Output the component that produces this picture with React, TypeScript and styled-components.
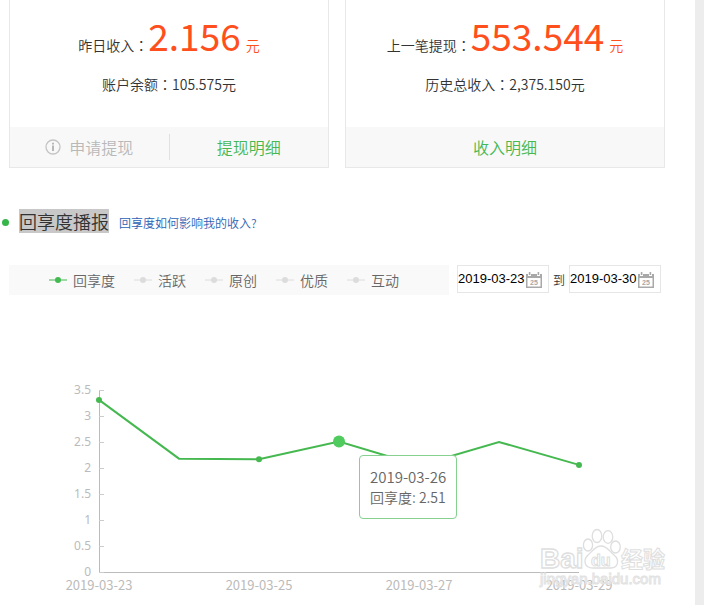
import React, { useState } from "react";
import styled, { createGlobalStyle } from "styled-components";

const GlobalStyle = createGlobalStyle`
  * { box-sizing: border-box; }
  body {
    margin: 0;
    background: #ededed;
    color: #333;
    font-family: "Noto Sans CJK SC", "Noto Sans", sans-serif;
    font-size: 14px;
    font-weight: 350;
    line-height: 20px;
  }
  button, input { font: inherit; color: inherit; }
`;

const Page = styled.main`
  min-height: 100vh;
  margin-right: 9px;
  padding: 0 30px 0 9px;
  background: #fff;
`;

const Cards = styled.section`
  display: grid;
  grid-template-columns: 1fr 1fr;
  gap: 16px;
`;

const Card = styled.article`
  display: flex;
  flex-direction: column;
  border: 1px solid #e8e8e8;
  border-top: 0;
`;

const CardBody = styled.div`
  padding: 8px 0 33px;
`;

const AmountRow = styled.div`
  display: flex;
  justify-content: center;
  align-items: baseline;
  margin-bottom: 12px;
`;

const Amount = styled.strong`
  color: #ff4f1c;
  font-size: 37px;
  font-weight: 400;
  line-height: 54px;
`;

const Unit = styled.span`
  margin-left: 5px;
  color: #ff4f1c;
`;

const Colon = styled.span`
  font-family: "Noto Sans CJK TC", sans-serif;
`;

const Summary = styled.p`
  margin: 0;
  text-align: center;
`;

const CardFooter = styled.footer`
  display: flex;
  align-items: center;
  height: 40px;
  background: #f8f8f8;
`;

const FooterButton = styled.button`
  display: flex;
  flex: 1;
  align-items: center;
  justify-content: center;
  gap: 8px;
  height: 26px;
  padding: 0;
  border: 0;
  background: none;
  color: #b8b8b8;
  font-size: 16px;
`;

const FooterLink = styled.a`
  flex: 1;
  color: #45b854;
  font-size: 16px;
  text-align: center;
  text-decoration: none;
`;

const Divider = styled.span`
  width: 1px;
  height: 26px;
  background: #e0e0e0;
`;

const SectionHead = styled.header`
  display: flex;
  align-items: center;
  margin: 41px 0 32px -7px;
`;

const Bullet = styled.span`
  width: 7px;
  height: 7px;
  margin: 2px 10px 0 0;
  border-radius: 50%;
  background: #36b548;
`;

const Title = styled.h2`
  margin: 0 10px 0 0;
  background: #c8c8c8;
  font-size: 18px;
  font-weight: 350;
  line-height: 24px;
`;

const HelpLink = styled.a`
  padding-top: 3px;
  color: #2a62b4;
  font-size: 12px;
  text-decoration: none;
`;

const Toolbar = styled.div`
  display: flex;
  align-items: flex-start;
  margin-right: 4px;
`;

const Legend = styled.div`
  display: flex;
  flex: 1;
  align-items: center;
  gap: 19px;
  height: 30px;
  margin-right: 8px;
  padding-left: 40px;
  background: #f9f9f9;
`;

const LegendItem = styled.button<{ $active: boolean }>`
  display: flex;
  align-items: center;
  gap: 6px;
  padding: 0;
  border: 0;
  background: none;
  color: #666;
  white-space: nowrap;

  svg { color: ${(p) => (p.$active ? "#43b952" : "#dcdcdc")}; }
`;

const DateField = styled.label`
  display: flex;
  align-items: center;
  width: 92px;
  height: 28px;
  border: 1px solid #e6e6e6;
`;

const DateInput = styled.input`
  width: 68px;
  padding: 0;
  border: 0;
  outline: 0;
  background: none;
  color: #000;
  font-family: "Liberation Sans", Arial, sans-serif;
  font-size: 13px;
`;

const To = styled.span`
  width: 20px;
  font-size: 12px;
  line-height: 30px;
  text-align: center;
`;

const ChartArea = styled.section`
  position: relative;
  margin-top: 70px;
`;

const ChartSvg = styled.svg`
  display: block;
  width: 100%;
  overflow: visible;
`;

const AxisLabel = styled.text`
  fill: #bbb;
  font-family: "Noto Sans", sans-serif;
  font-size: 12px;
  font-weight: 400;
`;

const DateLabel = styled(AxisLabel)`
  font-family: "Noto Sans CJK SC", sans-serif;
  font-size: 13px;
`;

const Tooltip = styled.div`
  position: absolute;
  width: 98px;
  padding: 10px;
  border: 1px solid #86d090;
  border-radius: 4px;
  background: #fff;
  color: #666;
  line-height: 21px;
  white-space: nowrap;
`;

const TooltipDate = styled.div`
  font-size: 15px;
`;

const Watermark = styled.svg`
  position: absolute;
  right: -3px;
  bottom: 11px;
  overflow: visible;
  pointer-events: none;
`;

const InfoIcon = () => (
  <svg width="16" height="16" viewBox="0 0 16 16" aria-hidden="true">
    <circle cx="8" cy="8" r="7" fill="none" stroke="#c4c4c4" strokeWidth="1.3" />
    <path d="M8 3.8v1.7M8 6.6v5.4" fill="none" stroke="#b0b0b0" strokeWidth="1.8" />
  </svg>
);

const SeriesIcon = () => (
  <svg width="18" height="8" viewBox="0 0 18 8" aria-hidden="true">
    <path d="M0 4h18" stroke="currentColor" strokeWidth="1" />
    <circle cx="9" cy="4" r="3" fill="currentColor" />
  </svg>
);

const CalendarIcon = () => (
  <svg width="16" height="17" viewBox="0 0 16 17" aria-hidden="true">
    <path d="M0 3h2v2h3V3h6v2h3V3h2v14H0z" fill="#a9a9a9" />
    <path d="M1.5 7h13v8.5h-13z" fill="#fff" />
    <path d="M2.8 1h1.6v3H2.8zM11.6 1h1.6v3h-1.6z" fill="#a9a9a9" />
    <text x="8" y="14" textAnchor="middle" fontSize="7" fontWeight="700" fontFamily="Liberation Sans, sans-serif" fill="#a8a8a8">25</text>
  </svg>
);

const SERIES = ["回享度", "活跃", "原创", "优质", "互动"];

const POINTS = [
  { date: "2019-03-23", value: 3.31 },
  { date: "2019-03-24", value: 2.18 },
  { date: "2019-03-25", value: 2.17 },
  { date: "2019-03-26", value: 2.51 },
  { date: "2019-03-27", value: 2.05 },
  { date: "2019-03-28", value: 2.5 },
  { date: "2019-03-29", value: 2.06 },
];

const WIDTH = 656;
const HEIGHT = 240;
const LEFT = 90;
const BASE = 207;
const STEP = 80;
const UNIT = 52;
const TICKS = [0, 0.5, 1, 1.5, 2, 2.5, 3, 3.5];

const px = (i: number) => LEFT + i * STEP;
const py = (v: number) => BASE - v * UNIT;

function Chart() {
  const [current, setCurrent] = useState(3);
  const point = POINTS[current];
  const tip = { x: px(current) + 20, y: py(point.value) + 14 };

  return (
    <ChartArea>
      <ChartSvg viewBox={`0 0 ${WIDTH} ${HEIGHT}`} role="img" aria-label="回享度">
        <path d={`M${LEFT + 0.5} ${py(3.5)}V${BASE + 0.5}H${px(6)}`} fill="none" stroke="#bbb" />
        {TICKS.map((t) => (
          <g key={t}>
            <path d={`M${LEFT} ${py(t) + 0.5}h5`} stroke="#ccc" />
            <AxisLabel x={LEFT - 8} y={py(t) + 4} textAnchor="end">{t}</AxisLabel>
          </g>
        ))}
        {POINTS.map((p, i) =>
          i % 2 === 0 ? (
            <DateLabel key={p.date} x={px(i)} y={BASE + 18} textAnchor="middle">{p.date}</DateLabel>
          ) : null
        )}
        <polyline
          points={POINTS.map((p, i) => `${px(i)},${py(p.value)}`).join(" ")}
          fill="none"
          stroke="#46b850"
          strokeWidth="2"
        />
        {POINTS.map((p, i) => (
          <circle
            key={p.date}
            cx={px(i)}
            cy={py(p.value)}
            r={i === current ? 6 : 3}
            fill={i === current ? "#50cb5e" : "#46b850"}
            opacity={i === current || i % 2 === 0 ? 1 : 0}
            onMouseEnter={() => setCurrent(i)}
          />
        ))}
      </ChartSvg>
      <Tooltip style={{ left: `${(tip.x / WIDTH) * 100}%`, top: `${(tip.y / HEIGHT) * 100}%` }}>
        <TooltipDate>{point.date}</TooltipDate>
        <div>回享度: {point.value}</div>
      </Tooltip>
      <Watermark width="128" height="64" viewBox="0 0 128 64" aria-hidden="true">
        <g fill="#fff" stroke="#dedede" strokeWidth="1.3">
          <text x="0" y="38" fontFamily="Liberation Sans, sans-serif" fontWeight="700" fontSize="28">Bai</text>
          <ellipse cx="48" cy="15" rx="4.6" ry="6" />
          <ellipse cx="57" cy="6" rx="4.8" ry="6.5" />
          <ellipse cx="68" cy="7" rx="4.8" ry="6.3" />
          <ellipse cx="75.500" cy="17" rx="4.8" ry="6" />
          <path d="M61 16c6 0 9 6 13 9 6 5 4 13-3 13H53c-9 0-10-8-5-13 4-3 7-9 13-9z" />
          <text x="51" y="36" fontFamily="Liberation Sans, sans-serif" fontWeight="700" fontSize="16" strokeWidth="1">du</text>
          <text x="81" y="37" fontFamily="Noto Sans CJK SC, sans-serif" fontWeight="700" fontSize="22" strokeWidth="1">经验</text>
        </g>
        <text x="0" y="54" fontFamily="Liberation Sans, sans-serif" fontSize="15" fill="#fff" fillOpacity="0.6" stroke="#e2e2e2" strokeWidth="1">jingyan.baidu.com</text>
      </Watermark>
    </ChartArea>
  );
}

type IncomeProps = {
  label: string;
  amount: string;
  totalLabel: string;
  total: string;
  children: React.ReactNode;
};

function IncomeCard({ label, amount, totalLabel, total, children }: IncomeProps) {
  return (
    <Card>
      <CardBody>
        <AmountRow>
          <span>{label}<Colon>：</Colon></span>
          <Amount>{amount}</Amount>
          <Unit>元</Unit>
        </AmountRow>
        <Summary>{totalLabel}<Colon>：</Colon>{total}元</Summary>
      </CardBody>
      <CardFooter>{children}</CardFooter>
    </Card>
  );
}

export default function App() {
  const [series, setSeries] = useState(SERIES[0]);
  const [from, setFrom] = useState("2019-03-23");
  const [until, setUntil] = useState("2019-03-30");

  return (
    <>
      <GlobalStyle />
      <Page>
        <Cards>
          <IncomeCard label="昨日收入" amount="2.156" totalLabel="账户余额" total="105.575">
            <FooterButton type="button"><InfoIcon />申请提现</FooterButton>
            <Divider />
            <FooterLink href="#withdrawals">提现明细</FooterLink>
          </IncomeCard>
          <IncomeCard label="上一笔提现" amount="553.544" totalLabel="历史总收入" total="2,375.150">
            <FooterLink href="#income">收入明细</FooterLink>
          </IncomeCard>
        </Cards>
        <SectionHead>
          <Bullet />
          <Title>回享度播报</Title>
          <HelpLink href="#help">回享度如何影响我的收入?</HelpLink>
        </SectionHead>
        <Toolbar>
          <Legend>
            {SERIES.map((name) => (
              <LegendItem key={name} type="button" $active={name === series} onClick={() => setSeries(name)}>
                <SeriesIcon />{name}
              </LegendItem>
            ))}
          </Legend>
          <DateField>
            <DateInput aria-label="开始日期" value={from} onChange={(e) => setFrom(e.target.value)} />
            <CalendarIcon />
          </DateField>
          <To>到</To>
          <DateField>
            <DateInput aria-label="结束日期" value={until} onChange={(e) => setUntil(e.target.value)} />
            <CalendarIcon />
          </DateField>
        </Toolbar>
        <Chart />
      </Page>
    </>
  );
}
